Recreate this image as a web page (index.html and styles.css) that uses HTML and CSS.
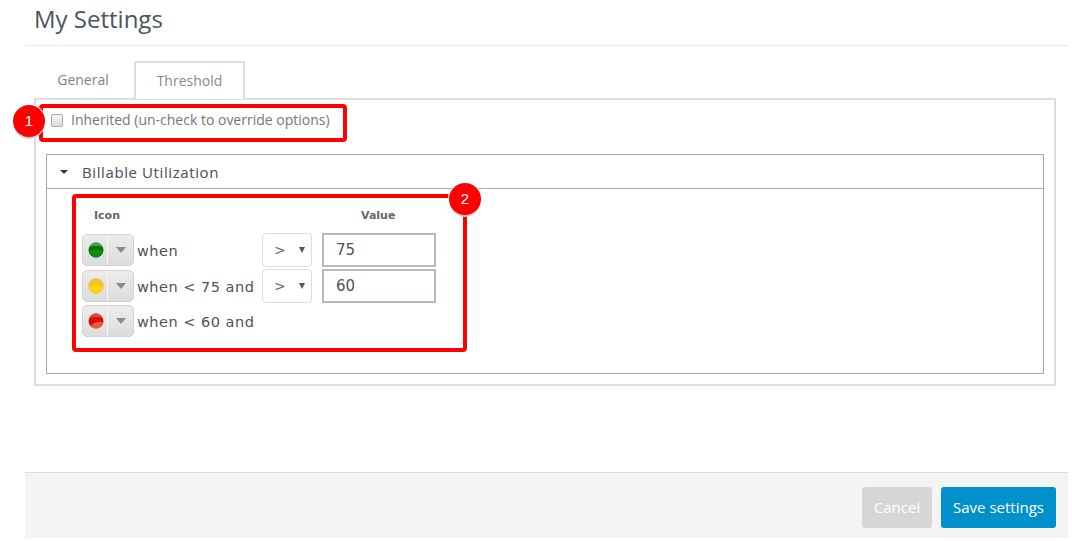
FILE: index.html
```html
<!DOCTYPE html>
<html lang="en">
<head>
<meta charset="utf-8">
<title>My Settings</title>
<link rel="stylesheet" href="styles.css">
</head>
<body>
<div class="page">
  <header class="head"><h1>My Settings</h1></header>
  <nav class="tabs">
    <a class="tab">General</a>
    <a class="tab active">Threshold</a>
  </nav>
  <main class="panel">
    <label class="inherit"><span class="check"></span>Inherited (un-check to override options)</label>
    <section class="box">
      <div class="box-head"><span class="caret"></span>Billable Utilization</div>
      <div class="box-body">
        <div class="grid">
          <div class="thead">
            <div class="th th-icon">Icon</div>
            <div class="th th-val">Value</div>
          </div>
          <div class="row">
            <span class="picker"><span class="pick-l"><svg width="16" height="16" viewBox="0 0 16 16"><circle cx="8" cy="8" r="7.500" fill="#0a6f0a"/><path d="M1.500 5.500C2.500 2 5 .5 8 .5s5.500 1.500 6.500 5C12 3.500 4 3.500 1.500 5.500z" fill="#4f9f4f"/><path d="M1 10c3-3 11-3 14 0-1 3.500-4 5.500-7 5.500S2 13.500 1 10z" fill="#0b8f0b"/></svg></span><span class="pick-r"><span class="tri"></span></span></span>
            <span class="when">when</span>
            <span class="op">&gt;<span class="op-tri"></span></span>
            <span class="val">75</span>
          </div>
          <div class="row">
            <span class="picker"><span class="pick-l"><svg width="16" height="16" viewBox="0 0 16 16"><circle cx="8" cy="8" r="7.300" fill="#fbbf1e" stroke="#d8b560" stroke-width=".7"/><path d="M1 9c3-3 11-3 14 0-1 4-4 6-7 6S2 13 1 9z" fill="#f6dc00"/></svg></span><span class="pick-r"><span class="tri"></span></span></span>
            <span class="when">when &lt; 75 and</span>
            <span class="op">&gt;<span class="op-tri"></span></span>
            <span class="val">60</span>
          </div>
          <div class="row row-last">
            <span class="picker"><span class="pick-l"><svg width="16" height="16" viewBox="0 0 16 16"><circle cx="8" cy="8" r="7.500" fill="#d1100f"/><path d="M1.500 5.500C2.500 2 5 .5 8 .5s5.500 1.500 6.500 5C12 3.500 4 3.500 1.500 5.500z" fill="#d94a44"/><path d="M3 13c3-4 8-5 12-3.500-1 3.500-4 6-7 6-2 0-4-1-5-2.500z" fill="#ea5a40"/></svg></span><span class="pick-r"><span class="tri"></span></span></span>
            <span class="when">when &lt; 60 and</span>
          </div>
        </div>
      </div>
    </section>
  </main>
  <footer class="foot">
    <button class="btn cancel">Cancel</button>
    <button class="btn save">Save settings</button>
  </footer>
</div>
<div class="mark mark-1"></div>
<div class="mark mark-2"></div>
<div class="badge badge-1">1</div>
<div class="badge badge-2">2</div>
</body>
</html>
```
FILE: styles.css
```css
* { box-sizing: border-box; }
html, body { margin: 0; padding: 0; background: #fff; }
body { font-family: "Open Sans", sans-serif; color: #6d7479; height: 541px; overflow: hidden; position: relative; }
.page { margin-left: 25px; width: 1043px; }
.head { height: 46px; border-bottom: 1px solid #eaeaea; padding-left: 9px; }
.head h1 { margin: 0; font-size: 24px; font-weight: 400; line-height: 38px; color: #4a565f; }
.tabs { display: flex; height: 38px; margin-top: 15px; padding-left: 8px; position: relative; z-index: 1; }
.tab { width: 100px; height: 38px; margin-right: 1px; text-align: center; font-size: 14px; line-height: 37px; color: #7d8489; }
.tab.active { width: 111px; border: 2px solid #ddd; border-bottom: 0; background: #fff; line-height: 35px; color: #858b90; }
.panel { margin: -1px 0 0 9px; width: 1022px; height: 288px; border: 2px solid #ddd; padding: 0 10px; }
.inherit { display: flex; align-items: center; height: 54px; padding: 0 0 14px 5px; font-size: 14px; color: #71787d; line-height: 20px; }
.check { width: 12px; height: 13px; margin-right: 8px; border: 1px solid #a8a8a8; border-radius: 2px; background: linear-gradient(#f4f4f4, #dcdcdc); }
.box { width: 998px; height: 220px; border: 1px solid #a9a9a9; }
.box-head { height: 34px; border-bottom: 1px solid #a9a9a9; padding: 1px 0 0 13px; display: flex; align-items: center; font-size: 15px; letter-spacing: .6px; color: #4a4f53; }
.caret { width: 0; height: 0; margin-right: 14px; border: 4px solid transparent; border-top-color: #333; border-bottom: 0; }
.box-body { padding: 20px 0 0 35px; }
.grid { width: 360px; }
.thead { display: flex; height: 23px; }
.th { font-family: "DejaVu Sans", sans-serif; font-size: 11px; font-weight: 700; color: #666; line-height: 14px; white-space: nowrap; }
.th-icon { width: 267px; padding-left: 12px; }
.th-val { width: 80px; padding-left: 12px; }
.row { display: flex; align-items: center; height: 36px; }
.row-last { margin-top: -1px; }
.picker { display: flex; flex: none; width: 52px; height: 32px; border: 1px solid #d2d2d2; border-radius: 5px; background: linear-gradient(#ececec, #dcdcdc); }
.pick-l { width: 25px; display: flex; align-items: center; justify-content: center; padding-left: 2px; border-right: 1px solid #f6f6f6; }
.pick-r { flex: 1; display: flex; align-items: center; justify-content: center; }
.tri { width: 0; height: 0; border: 5px solid transparent; border-top: 6px solid #8a8a8a; border-bottom: 0; }
.when { width: 128px; padding: 2px 0 0 3px; font-family: "DejaVu Sans", sans-serif; font-size: 14.500px; color: #4e5357; white-space: nowrap; letter-spacing: .5px; }
.op { position: relative; width: 50px; height: 34px; border: 1px solid #ddd; border-radius: 4px; background: #fff; padding-left: 11px; font-family: "DejaVu Sans", sans-serif; font-size: 14px; line-height: 32px; color: #666; }
.op-tri { position: absolute; right: 6px; top: 13px; width: 0; height: 0; border: 3px solid transparent; border-top: 6px solid #555; border-bottom: 0; }
.val { width: 114px; height: 34px; margin-left: 10px; border: 2px solid #b5bac0; padding-left: 12px; font-family: "DejaVu Sans", sans-serif; font-size: 15px; line-height: 30px; color: #4a5560; }
.foot { margin-top: 86px; height: 66px; border-top: 1px solid #ddd; background: #f4f4f4; display: flex; justify-content: flex-end; align-items: flex-start; gap: 9px; padding: 14px 12px 0 0; }
.btn { height: 41px; border: 0; border-radius: 3px; font-family: "Open Sans", sans-serif; font-size: 15px; color: #fff; padding: 0 0 2px; }
.cancel { width: 70px; background: #d6d6d6; }
.save { width: 115px; background: #0091cd; }
.mark { position: absolute; border: 4px solid #f00; border-radius: 4px; }
.mark-1 { left: 39px; top: 104px; width: 308px; height: 38px; }
.mark-2 { left: 72px; top: 194px; width: 395px; height: 158px; }
.badge { position: absolute; width: 32px; height: 32px; border-radius: 50%; background: #f00; color: #fff; font-family: "Liberation Sans", sans-serif; font-size: 15px; line-height: 32px; text-align: center; box-shadow: 0 3px 0 -1px #ccc, 0 0 0 1px #fff; }
.badge-1 { left: 13px; top: 105px; }
.badge-2 { left: 449px; top: 183px; }
```
